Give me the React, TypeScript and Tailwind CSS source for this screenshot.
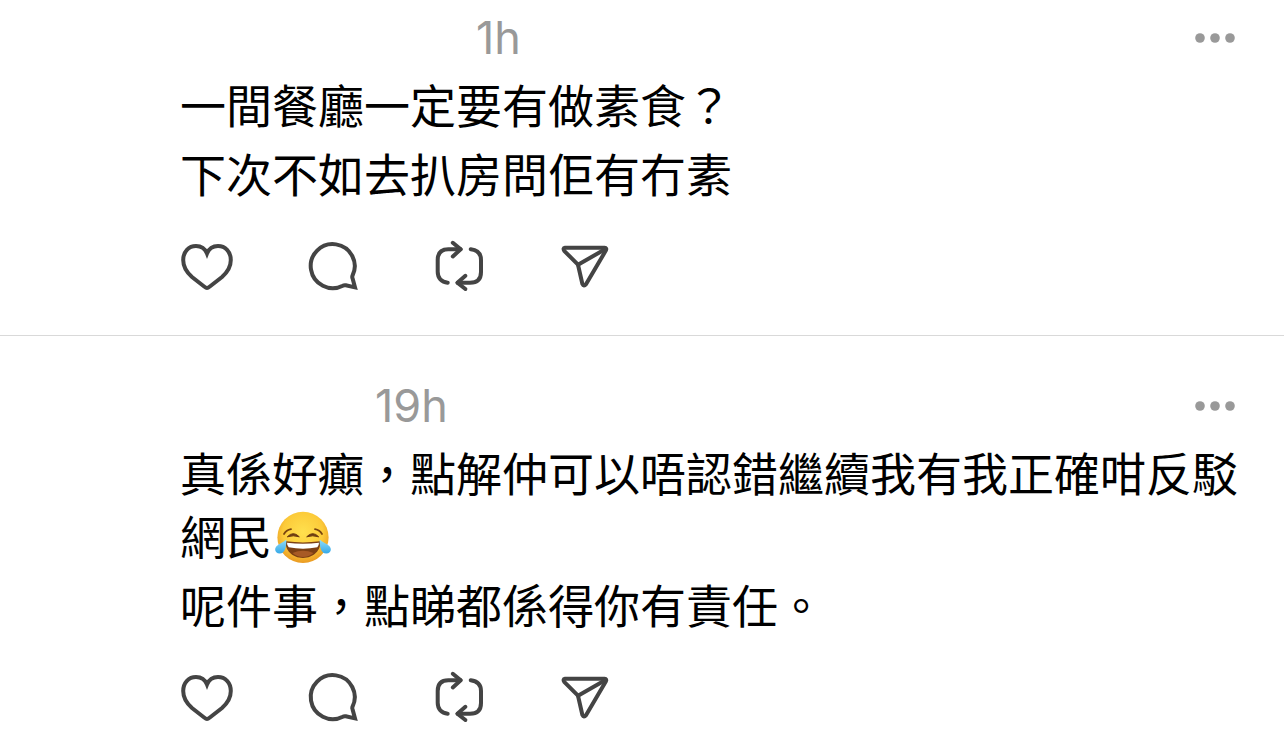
import type { ReactNode } from "react";

interface PostProps {
  time: string;
  headerClass: string;
  className?: string;
  children: ReactNode;
}

const iconProps = {
  viewBox: "0 0 56 56",
  className: "block w-14 h-14",
  fill: "none",
  stroke: "currentColor",
  strokeWidth: 4,
  strokeLinecap: "round",
  strokeLinejoin: "round",
  "aria-hidden": true,
} as const;

function HeartIcon() {
  return (
    <svg {...iconProps} strokeLinejoin="miter">
      <path d="M28 50C27 50 25.8 49 24.5 48L13 39C8.5 35 4.2 29.5 4.2 22C4.2 13.5 9.8 8 17 8C22 8 26 10.5 28 15.5C30 10.5 34 8 39 8C46.2 8 51.8 13.5 51.8 22C51.8 29.5 47.5 35 43 39L31.5 48C30.2 49 29 50 28 50Z" />
    </svg>
  );
}

function ReplyIcon() {
  return (
    <svg {...iconProps} strokeLinejoin="miter">
      <path d="M47.4 38A22 22 0 1 0 37.8 47.7Q39 47 40.8 47.3L50 49.4L47.6 40.5Q47 39.2 47.4 38Z" />
    </svg>
  );
}

function RepostIcon() {
  return (
    <svg {...iconProps}>
      <path d="M16.7 44.7C10.5 44 6.7 40 6.7 33.7V22C6.7 15 10.5 11.3 17.3 11.3H29.5" />
      <path d="M21.8 4.8L29.7 11.3L21.8 18.4" />
      <path d="M39.7 11.2C46.3 12 50 15.5 50 22V34C50 41 46 44.7 39 44.7H26.6" />
      <path d="M34.4 37.8L26.4 44.7L34.4 51" />
    </svg>
  );
}

function ShareIcon() {
  return (
    <svg {...iconProps}>
      <path d="M8 9.8H47.5Q50.2 10 48.8 12.6L29 46.3Q26.8 49 25.4 46L21 26.7L7.2 12.8Q5.6 10.2 8 9.8Z" />
      <path d="M21 26.7L48.5 11" />
    </svg>
  );
}

function JoyEmoji() {
  return (
    <svg viewBox="0 0 56 56" role="img" aria-label="😂" className="ml-[3px] inline-block w-14 h-14 align-bottom">
      <defs>
        <radialGradient id="face" cx="0.5" cy="0.4" r="0.6">
          <stop offset="0" stopColor="#ffe04e" />
          <stop offset="0.65" stopColor="#fccb3a" />
          <stop offset="1" stopColor="#ea9a22" />
        </radialGradient>
        <linearGradient id="tear" x1="0" y1="0" x2="0" y2="1">
          <stop offset="0" stopColor="#8fdcfa" />
          <stop offset="1" stopColor="#36a9e8" />
        </linearGradient>
      </defs>
      <circle cx="28" cy="27.4" r="25.6" fill="url(#face)" />
      <g fill="none" stroke="#7a4510" strokeLinecap="round">
        <path d="M9 24Q11.3 20 16 19.2M47 24Q44.7 20 40 19.2" strokeWidth="1.8" />
      </g>
      <path d="M12.3 26.8Q18.3 20.5 24.3 26.8Q18.3 24.8 12.3 26.8ZM31.7 26.8Q37.7 20.5 43.7 26.8Q37.7 24.8 31.7 26.8Z" fill="#6b3a10" stroke="#6b3a10" strokeWidth="1" strokeLinejoin="round" />
      <path d="M11 31.3Q28 33.6 45 31.3C46.5 40 38.5 48 28 48S9.5 40 11 31.3Z" fill="#7b3f14" />
      <path d="M12 32.8Q28 34.8 44 32.8Q44 36 42.3 37.3Q28 40 13.7 37.3Q12 36 12 32.8Z" fill="#fff" />
      <path d="M17.5 43Q28 38.5 38.5 43Q34 47 28 47T17.5 43Z" fill="#a85a25" />
      <path d="M11.3 29.5C11.6 35 10.5 43.5 4.8 43.5C0 43.5-1.2 38.8 1.8 36C4.5 33.5 8 32.5 11.3 29.5Z" fill="url(#tear)" />
      <path d="M44.7 29.5C44.4 35 45.5 43.5 51.2 43.5C56 43.5 57.2 38.8 54.2 36C51.5 33.5 48 32.5 44.7 29.5Z" fill="url(#tear)" />
    </svg>
  );
}

const actions = [
  { label: "讚好", Icon: HeartIcon },
  { label: "回覆", Icon: ReplyIcon },
  { label: "轉發", Icon: RepostIcon },
  { label: "分享", Icon: ShareIcon },
];

function Post({ time, headerClass, className = "", children }: PostProps) {
  return (
    <article className={`pr-10 pl-[180px] ${className}`}>
      <header className={`flex h-12 items-center justify-between pr-[9px] text-[#999999] ${headerClass}`}>
        <time className="font-[Inter,sans-serif] text-[45px] leading-[50px]">{time}</time>
        <button type="button" aria-label="更多" className="cursor-pointer">
          <svg viewBox="0 0 40 10" className="block h-[10px] w-10" fill="currentColor" aria-hidden="true">
            <circle cx="5" cy="5" r="4.8" />
            <circle cx="20" cy="5" r="4.8" />
            <circle cx="35" cy="5" r="4.8" />
          </svg>
        </button>
      </header>
      <div className="mt-[10px] flex flex-col gap-[6px] text-[46px] leading-[63px] text-black">{children}</div>
      <div className="mt-[34px] -ml-px flex gap-[70px] text-[#444444]">
        {actions.map(({ label, Icon }) => (
          <button key={label} type="button" aria-label={label} className="cursor-pointer">
            <Icon />
          </button>
        ))}
      </div>
    </article>
  );
}

export default function App() {
  return (
    <main lang="zh-HK" className="min-h-screen bg-white font-['Noto_Sans_CJK_TC',sans-serif]">
      <Post time="1h" headerClass="pl-[296px]" className="border-b border-[#d9d9d9] pt-[14px] pb-[41px]">
        <p>一間餐廳一定要有做素食？</p>
        <p>下次不如去扒房問佢有冇素</p>
      </Post>
      <Post time="19h" headerClass="pl-[195px]" className="pt-[46px] pb-[31px]">
        <p>
          真係好癲，點解仲可以唔認錯繼續我有我正確咁反駁網民
          <JoyEmoji />
        </p>
        <p>呢件事，點睇都係得你有責任。</p>
      </Post>
    </main>
  );
}
